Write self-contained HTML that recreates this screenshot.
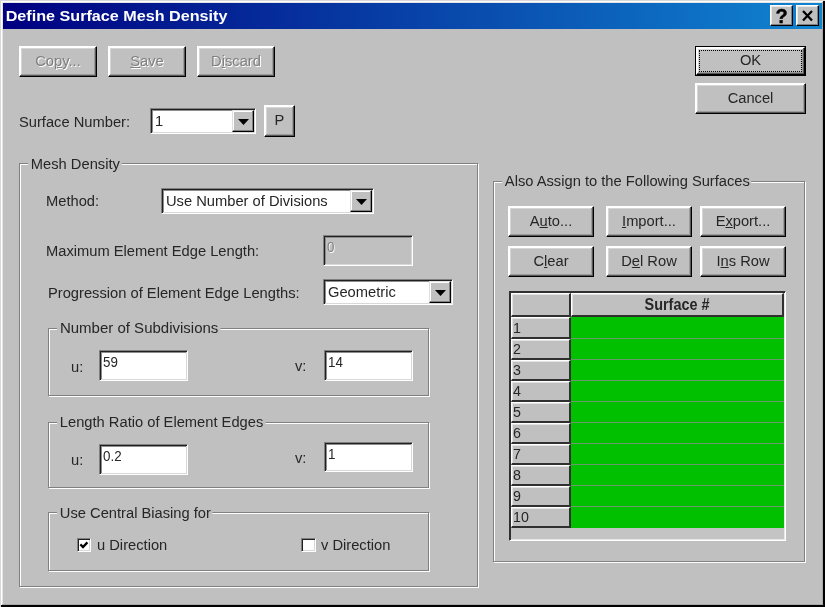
<!DOCTYPE html>
<html>
<head>
<meta charset="utf-8">
<title>Define Surface Mesh Density</title>
<style>
html,body{margin:0;padding:0;}
body{width:825px;height:607px;overflow:hidden;background:#c0c0c0;font-family:"Liberation Sans",sans-serif;font-size:15.5px;color:#262626;position:relative;}
.abs{position:absolute;box-sizing:border-box;}
#title{left:3px;top:3px;width:819px;height:26px;background:linear-gradient(to right,#000080 0%,#1084d0 100%);}
#title span{position:absolute;left:2px;top:4px;color:#fff;font-weight:bold;font-size:15px;line-height:18px;white-space:nowrap;transform:translateX(0.7px) scaleX(1.077);transform-origin:0 0;}
.tbtn{top:5px;width:23px;height:21px;background:#c0c0c0;border:1px solid;border-color:#fff #000 #000 #fff;box-shadow:inset -1px -1px 0 #808080, inset 1px 1px 0 #e8e8e8;}
.btn{background:#c0c0c0;border:1px solid;border-color:#fff #000 #000 #fff;box-shadow:inset -1px -1px 0 #585858, inset 1px 1px 0 #fff, inset -2px -2px 0 #9c9c9c, inset 2px 2px 0 #d6d6d6;text-align:center;white-space:nowrap;}
.btn span.t{position:absolute;left:0;right:0;top:50%;margin-top:-10px;line-height:18px;transform:scaleX(.948);transform-origin:50% 50%;}
.btn.dis{color:#808080;text-shadow:1px 1px 0 #fff;}
.lbl{white-space:nowrap;line-height:18px;transform:scaleX(.948);transform-origin:0 50%;}
.grp{border:1px solid #808080;box-shadow:1px 1px 0 #fff, inset 1px 1px 0 #fff;}
.glbl{background:#c0c0c0;padding:0 2px 0 3px;white-space:nowrap;line-height:18px;transform:scaleX(.948);transform-origin:0 50%;}
.edit{background:#fff;border:1px solid;border-color:#808080 #fff #fff #808080;box-shadow:inset 1px 1px 0 #202020, inset -1px -1px 0 #d8d8d8, inset 2px 2px 0 #8c8c8c;}
.edit span{position:absolute;left:4px;top:2px;line-height:18px;white-space:nowrap;transform:scaleX(.948);transform-origin:0 50%;}
.edit span{left:3px;transform:scaleX(.862);}
.edit.cb span{top:3px;left:4px;transform:scaleX(.948);}
.edit.dis{background:#c0c0c0;color:#808080;text-shadow:1px 1px 0 #fff;}
.dd{background:#c0c0c0;border:1px solid;border-color:#dfdfdf #000 #000 #dfdfdf;box-shadow:inset -1px -1px 0 #808080, inset 1px 1px 0 #fff;}
.dd svg{position:absolute;left:5px;top:8px;}
u{text-decoration:underline;text-underline-offset:1px;text-decoration-thickness:1px;}
.chk{width:15px;height:15px;background:#fff;border:1px solid;border-color:#808080 #fff #fff #808080;box-shadow:inset 1px 1px 0 #202020, inset -1px -1px 0 #d8d8d8;}
.rh{background:#c0c0c0;border-right:2px solid #303030;border-bottom:2px solid #303030;border-top:1px solid #fff;border-left:1px solid #fff;line-height:18px;padding-left:1px;box-shadow:inset 1px 1px 0 #e2e2e2;}
.rh span{display:inline-block;transform:scaleX(.92);transform-origin:0 50%;}
.gc{background:#00c000;border-bottom:1px solid #6a9a6a;}
</style>
</head>
<body>
<div id="w" style="position:absolute;left:0;top:0;width:825px;height:607px;will-change:transform;">
<!-- window frame -->
<div class="abs" style="left:0;top:0;width:825px;height:607px;background:#d8d8d8;"></div>
<div class="abs" style="left:1px;top:1px;width:824px;height:606px;background:#000;"></div>
<div class="abs" style="left:1px;top:1px;width:822px;height:604px;background:#fff;"></div>
<div class="abs" style="left:2px;top:2px;width:821px;height:603px;background:#a8a8a8;"></div>
<div class="abs" style="left:2px;top:2px;width:820px;height:602px;background:#e4e4e4;"></div>
<div class="abs" style="left:3px;top:3px;width:819px;height:601px;background:#c0c0c0;"></div>

<div id="title" class="abs"><span>Define Surface Mesh Density</span></div>
<div class="abs tbtn" style="left:770px;"><svg width="22" height="20" viewBox="0 0 22 20" style="position:absolute;left:0;top:0"><text x="10.5" y="16.7" font-family="Liberation Sans" font-weight="bold" font-size="20" stroke="#000" stroke-width="0.4" text-anchor="middle" fill="#000">?</text></svg></div>
<div class="abs tbtn" style="left:796px;width:23px;"><svg width="22" height="20" viewBox="0 0 22 20" style="position:absolute;left:0;top:0"><path d="M6 5 L15 14.5 M15 5 L6 14.5" stroke="#000" stroke-width="2.3" fill="none"/></svg></div>

<!-- top buttons -->
<div class="abs btn dis" style="left:19px;top:46px;width:78px;height:31px;"><span class="t">Co<u>p</u>y...</span></div>
<div class="abs btn dis" style="left:108px;top:46px;width:78px;height:31px;"><span class="t"><u>S</u>ave</span></div>
<div class="abs btn dis" style="left:197px;top:46px;width:78px;height:31px;"><span class="t">D<u>i</u>scard</span></div>

<div class="abs" style="left:695px;top:46px;width:111px;height:30px;background:#000;"></div>
<div class="abs btn" style="left:696px;top:47px;width:109px;height:28px;"><span class="t">OK</span><div class="abs" style="left:2px;top:2px;right:2px;bottom:2px;border:1px dotted #000;"></div></div>
<div class="abs btn" style="left:695px;top:83px;width:111px;height:31px;"><span class="t">Cancel</span></div>

<!-- surface number -->
<div class="abs lbl" style="left:19px;top:113px;">Surface Number:</div>
<div class="abs edit cb" style="left:150px;top:108px;width:106px;height:26px;"><span>1</span></div>
<div class="abs dd" style="left:232px;top:110px;width:22px;height:22px;"><svg width="11" height="6" viewBox="0 0 11 6"><path d="M0 0 H11 L5.5 6 Z"/></svg></div>
<div class="abs btn" style="left:264px;top:105px;width:31px;height:32px;"><span class="t">P</span></div>

<!-- Mesh Density group -->
<div class="abs grp" style="left:19px;top:163px;width:459px;height:424px;"></div>
<div class="abs glbl" style="left:28px;top:155px;">Mesh Density</div>

<div class="abs lbl" style="left:46px;top:192px;">Method:</div>
<div class="abs edit cb" style="left:161px;top:188px;width:213px;height:26px;"><span>Use Number of Divisions</span></div>
<div class="abs dd" style="left:350px;top:190px;width:22px;height:22px;"><svg width="11" height="6" viewBox="0 0 11 6"><path d="M0 0 H11 L5.5 6 Z"/></svg></div>

<div class="abs lbl" style="left:46px;top:242px;">Maximum Element Edge Length:</div>
<div class="abs edit dis" style="left:323px;top:235px;width:90px;height:31px;"><span>0</span></div>

<div class="abs lbl" style="left:48px;top:284px;">Progression of Element Edge Lengths:</div>
<div class="abs edit cb" style="left:323px;top:279px;width:130px;height:26px;"><span>Geometric</span></div>
<div class="abs dd" style="left:429px;top:281px;width:22px;height:22px;"><svg width="11" height="6" viewBox="0 0 11 6"><path d="M0 0 H11 L5.5 6 Z"/></svg></div>

<!-- Number of Subdivisions -->
<div class="abs grp" style="left:48px;top:328px;width:381px;height:68px;"></div>
<div class="abs glbl" style="left:57px;top:319px;transform:scaleX(.968);">Number of Subdivisions</div>
<div class="abs lbl" style="left:71px;top:358px;">u:</div>
<div class="abs edit" style="left:99px;top:350px;width:89px;height:31px;"><span>59</span></div>
<div class="abs lbl" style="left:295px;top:357px;">v:</div>
<div class="abs edit" style="left:324px;top:350px;width:89px;height:31px;"><span>14</span></div>

<!-- Length Ratio -->
<div class="abs grp" style="left:48px;top:422px;width:381px;height:66px;"></div>
<div class="abs glbl" style="left:57px;top:413px;">Length Ratio of Element Edges</div>
<div class="abs lbl" style="left:71px;top:451px;">u:</div>
<div class="abs edit" style="left:99px;top:444px;width:89px;height:31px;"><span>0.2</span></div>
<div class="abs lbl" style="left:295px;top:449px;">v:</div>
<div class="abs edit" style="left:324px;top:442px;width:89px;height:30px;"><span>1</span></div>

<!-- Central biasing -->
<div class="abs grp" style="left:48px;top:512px;width:381px;height:59px;"></div>
<div class="abs glbl" style="left:57px;top:504px;">Use Central Biasing for</div>
<div class="abs chk" style="left:77px;top:538px;width:14px;height:14px;"><svg width="12" height="12" viewBox="0 0 12 12" style="position:absolute;left:0;top:0"><path d="M2.4 5.4 L5 8 L9.4 3.4" stroke="#000" stroke-width="2.3" fill="none"/></svg></div>
<div class="abs lbl" style="left:97px;top:536px;">u Direction</div>
<div class="abs chk" style="left:301px;top:538px;width:15px;height:14px;"></div>
<div class="abs lbl" style="left:321px;top:536px;">v Direction</div>

<!-- Also assign group -->
<div class="abs grp" style="left:493px;top:181px;width:312px;height:381px;"></div>
<div class="abs glbl" style="left:502px;top:172px;">Also Assign to the Following Surfaces</div>

<div class="abs btn" style="left:508px;top:206px;width:86px;height:31px;"><span class="t">A<u>u</u>to...</span></div>
<div class="abs btn" style="left:606px;top:206px;width:86px;height:31px;"><span class="t"><u>I</u>mport...</span></div>
<div class="abs btn" style="left:700px;top:206px;width:86px;height:31px;"><span class="t">E<u>x</u>port...</span></div>
<div class="abs btn" style="left:508px;top:246px;width:86px;height:31px;"><span class="t">C<u>l</u>ear</span></div>
<div class="abs btn" style="left:606px;top:246px;width:86px;height:31px;"><span class="t">D<u>e</u>l Row</span></div>
<div class="abs btn" style="left:700px;top:246px;width:86px;height:31px;"><span class="t">I<u>n</u>s Row</span></div>

<!-- grid -->
<div class="abs" id="grid" style="left:509px;top:291px;width:277px;height:250px;background:#c4c4c4;border:1px solid;border-color:#303030 #fff #fff #303030;box-shadow:inset 1px 1px 0 #303030, inset -1px -1px 0 #e8e8e8;"></div>
<div class="abs rh" style="left:511px;top:293px;width:60px;height:24px;"></div>
<div class="abs rh" style="left:571px;top:293px;width:213px;height:24px;font-weight:bold;text-align:center;line-height:21px;padding:0;font-size:16px;"><span style="transform:scaleX(.9);transform-origin:50% 50%;">Surface #</span></div>
<div class="abs rh" style="left:511px;top:317px;width:60px;height:22px;line-height:19px;"><span>1</span></div><div class="abs gc" style="left:571px;top:317px;width:213px;height:22px;"></div>
<div class="abs rh" style="left:511px;top:339px;width:60px;height:21px;"><span>2</span></div><div class="abs gc" style="left:571px;top:339px;width:213px;height:21px;"></div>
<div class="abs rh" style="left:511px;top:360px;width:60px;height:21px;"><span>3</span></div><div class="abs gc" style="left:571px;top:360px;width:213px;height:21px;"></div>
<div class="abs rh" style="left:511px;top:381px;width:60px;height:21px;"><span>4</span></div><div class="abs gc" style="left:571px;top:381px;width:213px;height:21px;"></div>
<div class="abs rh" style="left:511px;top:402px;width:60px;height:21px;"><span>5</span></div><div class="abs gc" style="left:571px;top:402px;width:213px;height:21px;"></div>
<div class="abs rh" style="left:511px;top:423px;width:60px;height:21px;"><span>6</span></div><div class="abs gc" style="left:571px;top:423px;width:213px;height:21px;"></div>
<div class="abs rh" style="left:511px;top:444px;width:60px;height:21px;"><span>7</span></div><div class="abs gc" style="left:571px;top:444px;width:213px;height:21px;"></div>
<div class="abs rh" style="left:511px;top:465px;width:60px;height:21px;"><span>8</span></div><div class="abs gc" style="left:571px;top:465px;width:213px;height:21px;"></div>
<div class="abs rh" style="left:511px;top:486px;width:60px;height:21px;"><span>9</span></div><div class="abs gc" style="left:571px;top:486px;width:213px;height:21px;"></div>
<div class="abs rh" style="left:511px;top:507px;width:60px;height:21px;"><span>10</span></div><div class="abs gc" style="left:571px;top:507px;width:213px;height:21px;border-bottom-color:#00c000;"></div>
</div>
</body>
</html>
